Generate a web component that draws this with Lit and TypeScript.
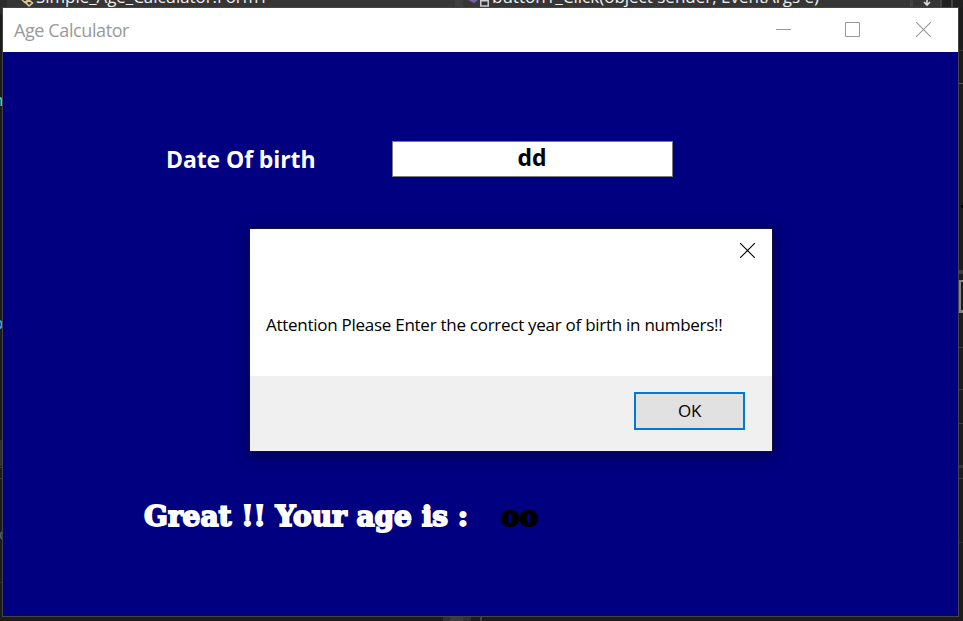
import { LitElement, html, css, svg } from "lit";
import { customElement, property } from "lit/decorators.js";

/** Dark code editor whose edges show around the application window. */
@customElement("editor-backdrop")
class EditorBackdrop extends LitElement {
  static styles = css`
    :host { display: block; }
    svg { display: block; }
    text { font-family: "Open Sans", "Noto Sans", sans-serif; font-size: 16px; fill: #f1f1f1; }
    .teal { fill: #4ec9b0; font-weight: 600; }
    .blue { fill: #569cd6; font-weight: 600; }
    .dim { fill: #666; }
  `;
  private rule(x: number, y: number, w: number, h: number, fill = "#3c3c3c") {
    return svg`<rect x=${x} y=${y} width=${w} height=${h} fill=${fill} />`;
  }
  render() {
    return html`<svg width="963" height="621" viewBox="0 0 963 621">
      <rect width="963" height="621" fill="#1c1c1c" />
      ${this.rule(7, 0, 951, 7, "#363636")}
      ${this.rule(0, 0, 7, 14, "#2b2b2b")}
      ${this.rule(455, 0, 8, 7, "#3f3f3f")}
      ${this.rule(910, 0, 3, 7, "#444")}
      ${this.rule(941, 0, 12, 7, "#202020")}
      ${this.rule(940, 0, 2, 7, "#444")}
      ${this.rule(951, 0, 2, 7, "#444")}
      ${this.rule(953, 0, 10, 7, "#202020")}
      <path d="M22 0l3 2.500 3-2.500M26 3l3-3 3.500 3-3.500 3z" fill="none" stroke="#e0c68c" stroke-width="1.600" />
      <text x="36" y="3" textLength="232" lengthAdjust="spacingAndGlyphs">Simple_Age_Calculator.Form1</text>
      <path d="M468 0h10l-4 3z" fill="#7a5fa8" />
      <rect x="480.750" y="-2" width="7.500" height="8" fill="#333" stroke="#ccc" stroke-width="1.500" />
      <path d="M480 .75h9" stroke="#ccc" stroke-width="1.500" />
      <text x="492" y="3" textLength="327" lengthAdjust="spacingAndGlyphs">button1_Click(object sender, EventArgs e)</text>
      <path d="M927 0v4M924 2l3 3 3-3" fill="none" stroke="#ddd" stroke-width="1.600" />
      <text class="teal" x="-6.500" y="106">n</text>
      <text class="blue" x="-6.500" y="329">p</text>
      <text class="dim" x="-1" y="540">c</text>
      ${this.rule(0, 440, 3, 26, "#303030")}
      ${this.rule(0, 467, 3, 1)} ${this.rule(0, 478, 3, 1)} ${this.rule(0, 582, 3, 1, "#2c2c2c")}
      ${this.rule(959, 50, 4, 1)} ${this.rule(959, 83, 4, 1, "#555")}
      ${this.rule(961, 205, 2, 3, "#000")} ${this.rule(959, 270, 4, 4)}
      ${this.rule(959, 280, 2, 33, "#858585")} ${this.rule(961, 280, 2, 2, "#858585")}
      ${this.rule(961, 310, 2, 3, "#858585")}
      ${this.rule(959, 347, 4, 1)} ${this.rule(959, 389, 4, 1)} ${this.rule(959, 423, 4, 1)}
      ${this.rule(959, 465, 4, 3, "#333")} ${this.rule(959, 478, 4, 1)} ${this.rule(959, 542, 4, 1, "#2c2c2c")}
      ${this.rule(443, 617, 28, 4, "#303030")} ${this.rule(450, 617, 13, 4, "#3c3c3c")}
      ${this.rule(480, 617, 2, 4, "#444")}
    </svg>`;
  }
}

@customElement("message-box")
class MessageBox extends LitElement {
  @property() message = "";
  static styles = css`
    :host {
      display: flex; flex-direction: column; box-sizing: border-box;
      width: 524px; height: 224px; border: 1px solid #10103a; background: #fff;
      box-shadow: 0 3px 14px rgba(0, 0, 0, 0.4);
      font-family: "Open Sans", "Noto Sans", sans-serif; color: #000;
    }
    header { display: flex; justify-content: flex-end; padding: 14px 17px 0 0; height: 69px; box-sizing: border-box; }
    svg { display: block; }
    .message { flex: 1; padding: 14px 16px 0; font-size: 17px; line-height: 26px; letter-spacing: -0.27px; white-space: nowrap; }
    footer { display: flex; justify-content: flex-end; box-sizing: border-box; height: 75px; padding: 16px 27px 0 0; background: #f0f0f0; }
    button {
      width: 111px; height: 38px; padding: 0; border: 2px solid #0078d7; background: #e1e1e1;
      font: 17px/34px "Open Sans", "Noto Sans", sans-serif; letter-spacing: -0.4px; color: #000;
    }
  `;
  render() {
    return html`
      <header>
        <svg width="15" height="15" viewBox="0 0 15 15"><path d="M0 0l15 15M15 0l-15 15" stroke="#000" stroke-width="1.100" /></svg>
      </header>
      <div class="message">${this.message}</div>
      <footer><button>OK</button></footer>
    `;
  }
}

@customElement("app-root")
class AppRoot extends LitElement {
  static styles = css`
    :host {
      display: block; position: relative; width: 963px; height: 621px; overflow: hidden;
      font-family: "Open Sans", "Noto Sans", sans-serif;
    }
    .window {
      position: absolute; left: 2px; top: 7px; box-sizing: border-box; width: 957px; height: 610px;
      border: 1px solid #444; display: flex; flex-direction: column;
    }
    .titlebar {
      display: flex; justify-content: space-between; align-items: center; height: 44px;
      box-sizing: border-box; padding: 0 27px 0 11px; background: #fff; color: #999;
    }
    .title { font-size: 18px; line-height: 26px; letter-spacing: -0.4px; white-space: nowrap; }
    .controls { display: flex; gap: 54px; align-self: flex-start; margin-top: 14px; }
    .controls svg { display: block; }
    .close { margin-left: 2px; }
    .client { flex: 1; background: #000080; }
    .birth { display: flex; padding: 89px 0 0 163px; }
    .label { width: 226px; font-size: 23px; font-weight: 700; line-height: 36px; letter-spacing: -0.1px; color: #fff; white-space: nowrap; }
    input {
      box-sizing: border-box; width: 281px; height: 36px; padding: 0 1px 5px 0; margin: 0;
      border: 1px solid #7a7a7a; background: #fff; color: #000; text-align: center;
      font: 700 23px "Open Sans", "Noto Sans", sans-serif; outline: none; border-radius: 0;
    }
    .result {
      display: flex; padding: 320px 0 0 141px; line-height: 40px; white-space: nowrap;
      font-family: "DejaVu Serif", serif; font-weight: 700; font-size: 28px;
      color: #fff; -webkit-text-stroke: 1.8px currentColor;
    }
    .caption { width: 357px; letter-spacing: -0.02px; }
    .age { color: #000; -webkit-text-stroke-width: 2.2px; }
    message-box { position: absolute; left: 249px; top: 228px; }
  `;
  render() {
    return html`
      <editor-backdrop></editor-backdrop>
      <div class="window">
        <div class="titlebar">
          <span class="title">Age Calculator</span>
          <div class="controls">
            <svg width="15" height="15" viewBox="0 0 15 15"><path d="M0 7.500h15" stroke="#999" /></svg>
            <svg width="15" height="15" viewBox="0 0 15 15"><path d="M.5 .5h14v14h-14z" fill="none" stroke="#999" /></svg>
            <svg class="close" width="15" height="15" viewBox="0 0 15 15"><path d="M0 0l15 15M15 0l-15 15" stroke="#999" stroke-width="1.100" /></svg>
          </div>
        </div>
        <div class="client">
          <div class="birth">
            <span class="label">Date Of birth</span>
            <input .value=${"dd"} />
          </div>
          <div class="result">
            <span class="caption">Great !! Your age is :</span>
            <span class="age">oo</span>
          </div>
        </div>
      </div>
      <message-box message="Attention Please Enter the correct year of birth in numbers!!"></message-box>
    `;
  }
}
